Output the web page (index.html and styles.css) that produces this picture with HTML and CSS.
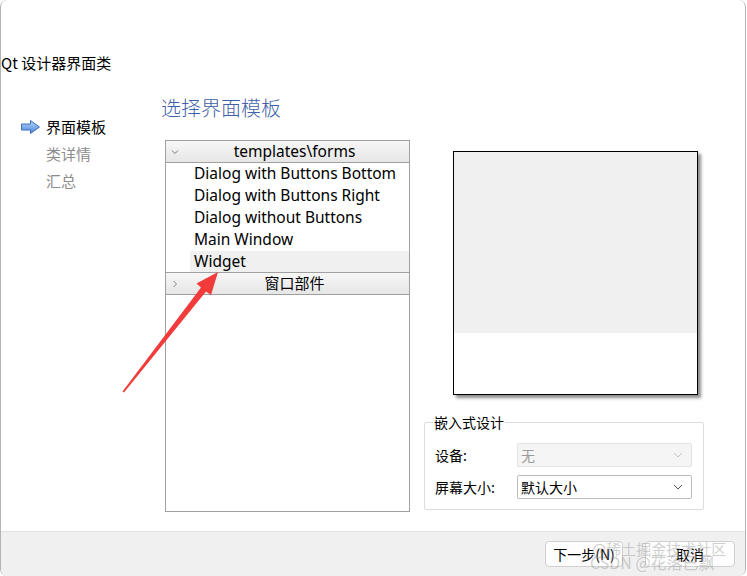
FILE: index.html
```html
<!DOCTYPE html>
<html lang="zh-CN">
<head>
    <meta charset="UTF-8">
    <title>Qt 设计器界面类</title>
    <link rel="stylesheet" href="styles.css">
</head>
<body>
<div class="window">
    <div class="title">Qt 设计器界面类</div>

    <div class="main">
        <div class="nav">
            <div class="nav-item active">
                <svg class="nav-arrow" width="19" height="14" viewBox="0 0 19 14">
                    <defs>
                        <linearGradient id="blueArrow" x1="0" y1="0" x2="0" y2="1">
                            <stop offset="0" stop-color="#b9d4f6"/>
                            <stop offset="1" stop-color="#4a86dc"/>
                        </linearGradient>
                    </defs>
                    <polygon points="0.5,4 9.5,4 9.5,0.5 18.5,7 9.5,13.5 9.5,10 0.5,10" fill="url(#blueArrow)" stroke="#3d6fc0" stroke-width="1"/>
                </svg>
                界面模板
            </div>
            <div class="nav-item">类详情</div>
            <div class="nav-item">汇总</div>
        </div>

        <div class="content">
            <div class="heading">选择界面模板</div>

            <div class="body-row">
                <div class="tree">
                    <div class="tree-header">
                        <svg class="tree-toggle" width="8" height="6" viewBox="0 0 8 6"><polyline points="1,1.5 4,4.5 7,1.5" fill="none" stroke="#777" stroke-width="1"/></svg>
                        templates\forms
                    </div>
                    <div class="tree-item">Dialog with Buttons Bottom</div>
                    <div class="tree-item">Dialog with Buttons Right</div>
                    <div class="tree-item">Dialog without Buttons</div>
                    <div class="tree-item">Main Window</div>
                    <div class="tree-item selected">Widget</div>
                    <div class="tree-header second">
                        <svg class="tree-toggle" width="6" height="8" viewBox="0 0 6 8"><polyline points="1.5,1 4.5,4 1.5,7" fill="none" stroke="#888" stroke-width="1"/></svg>
                        窗口部件
                    </div>
                </div>

                <div class="side">
                    <div class="preview">
                        <div class="preview-top"></div>
                    </div>

                    <fieldset class="group">
                        <legend>嵌入式设计</legend>
                        <div class="form-row">
                            <span class="form-label">设备:</span>
                            <div class="combo disabled">
                                <span>无</span>
                                <svg width="10" height="6" viewBox="0 0 10 6"><polyline points="1,1 5,5 9,1" fill="none" stroke="#c4c4c4" stroke-width="1"/></svg>
                            </div>
                        </div>
                        <div class="form-row">
                            <span class="form-label">屏幕大小:</span>
                            <div class="combo">
                                <span>默认大小</span>
                                <svg width="10" height="6" viewBox="0 0 10 6"><polyline points="1,1 5,5 9,1" fill="none" stroke="#555" stroke-width="1"/></svg>
                            </div>
                        </div>
                    </fieldset>
                </div>
            </div>
        </div>
    </div>

    <div class="footer">
        <button class="btn btn-next">下一步(N)</button>
        <button class="btn btn-cancel">取消</button>
    </div>
</div>

<!-- annotation arrow drawn over the screenshot -->
<svg class="red-arrow" width="747" height="576" viewBox="0 0 747 576">
    <polygon points="122.5,391.5 201,287.5 196.5,283.5 218,272 211,295 206,291.5 124,392.5" fill="#f23b3b"/>
</svg>

<div class="watermark wm1">@稀土掘金技术社区</div>
<div class="watermark wm2">CSDN @花落已飘</div>
</body>
</html>
```

FILE: styles.css
```css
body {
    margin: 0;
    padding: 0;
    width: 747px;
    height: 576px;
    overflow: hidden;
    background: #fff;
    font-family: "Noto Sans", "Noto Sans CJK SC", sans-serif;
    color: #000;
    position: relative;
}
.window {
    width: 746px;
    height: 576px;
    border-left: 1px solid #b4b4b4;
    border-right: 1px solid #b4b4b4;
    border-radius: 7px;
    display: flex;
    flex-direction: column;
    box-sizing: border-box;
    overflow: hidden;
}
.title {
    padding-top: 53px;
    height: 20px;
    line-height: 20px;
    font-size: 15px;
    font-family: "Noto Sans CJK SC", sans-serif;
}
.main {
    flex: 1;
    display: flex;
}
.nav {
    width: 160px;
    padding-top: 40px;
    box-sizing: border-box;
    flex-shrink: 0;
}
.nav-item {
    height: 27px;
    line-height: 27px;
    font-size: 15px;
    padding-left: 45px;
    color: #8c8c8c;
    font-family: "Noto Sans CJK SC", sans-serif;
    position: relative;
}
.nav-item.active {
    color: #000;
}
.nav-arrow {
    position: absolute;
    left: 20px;
    top: 7px;
}
.content {
    flex: 1;
}
.heading {
    margin-top: 21px;
    height: 28px;
    line-height: 28px;
    font-size: 20px;
    color: #3f5fa8;
    font-family: "Noto Sans CJK SC", sans-serif;
    font-weight: 300;
}
.body-row {
    margin-top: 18px;
    display: flex;
}
.tree {
    margin-left: 4px;
    width: 245px;
    height: 372px;
    border: 1px solid #a0a0a0;
    box-sizing: border-box;
}
.tree-header {
    height: 22px;
    line-height: 21px;
    box-sizing: border-box;
    border-bottom: 1px solid #a0a0a0;
    background: linear-gradient(#f7f7f7, #e6e6e6);
    text-align: center;
    padding-left: 14px;
    font-size: 15.5px;
    position: relative;
    font-family: "Noto Sans", "Noto Sans CJK SC", sans-serif;
}
.tree-header.second {
    border-top: 1px solid #a0a0a0;
    height: 23px;
    margin-top: -1px;
    font-size: 15px;
}
.tree-toggle {
    position: absolute;
    left: 5px;
    top: 8px;
}
.tree-header.second .tree-toggle {
    left: 6px;
    top: 7px;
}
.tree-item {
    height: 22px;
    line-height: 20px;
    font-size: 15.5px;
    margin-left: 24px;
    padding-left: 4px;
}
.tree-item.selected {
    background: #f0f0f0;
}
.side {
    margin-left: 14px;
    width: 280px;
}
.preview {
    margin-top: 11px;
    margin-left: 29px;
    width: 245px;
    height: 244px;
    border: 1px solid #000;
    box-sizing: border-box;
    background: #fff;
    box-shadow: 3px 3px 3px rgba(0, 0, 0, 0.45);
}
.preview-top {
    height: 181px;
    background: #f0f0f0;
}
.group {
    margin: 17px 0 0 0;
    padding: 11px 10px 10px 10px;
    border: 1px solid #dcdcdc;
    border-radius: 2px;
    width: 280px;
    box-sizing: border-box;
    font-family: "Noto Sans CJK SC", sans-serif;
}
.group legend {
    margin-left: -2px;
    padding: 0 1px;
    font-size: 14px;
    line-height: 20px;
}
.form-row {
    display: flex;
    align-items: center;
    height: 24px;
}
.form-row + .form-row {
    margin-top: 8px;
}
.form-label {
    width: 82px;
    font-size: 14px;
    flex-shrink: 0;
}
.combo {
    width: 175px;
    height: 24px;
    box-sizing: border-box;
    border: 1px solid #bcbcbc;
    border-radius: 2px;
    background: #fff;
    display: flex;
    align-items: center;
    justify-content: space-between;
    padding: 0 8px 0 3px;
    font-size: 14px;
}
.combo.disabled {
    background: #f5f5f5;
    border-color: #e2e2e2;
    color: #9a9a9a;
}
.footer {
    height: 45px;
    box-sizing: border-box;
    background: #f0f0f0;
    border-top: 1px solid #e3e3e3;
    display: flex;
    justify-content: flex-end;
    padding: 9px 10px 0 0;
}
.btn {
    height: 26px;
    box-sizing: border-box;
    background: #fdfdfd;
    border: 1px solid #d0d0d0;
    border-radius: 4px;
    font-size: 14px;
    font-family: "Noto Sans CJK SC", sans-serif;
    color: #000;
    padding: 0;
}
.btn-next {
    width: 78px;
}
.btn-cancel {
    width: 90px;
    margin-left: 22px;
}
.red-arrow {
    position: absolute;
    left: 0;
    top: 0;
    pointer-events: none;
}
.watermark {
    position: absolute;
    font-family: "Noto Sans CJK SC", sans-serif;
    color: rgba(150, 150, 150, 0.45);
    white-space: nowrap;
}
.wm1 {
    left: 592px;
    top: 538px;
    font-size: 15px;
}
.wm2 {
    left: 590px;
    top: 550px;
    font-size: 16px;
}
```
